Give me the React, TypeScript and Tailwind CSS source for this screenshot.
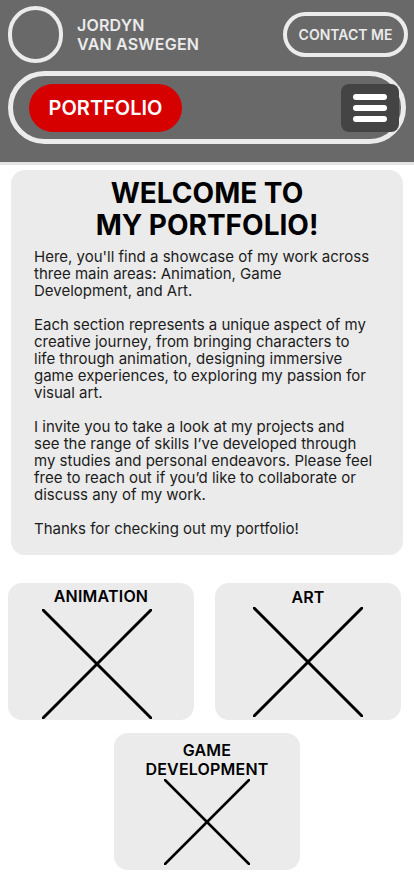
import React from 'react';

interface ProjectCardProps {
  title: string[];
  size: number;
  stroke: number;
  className?: string;
  crossClass?: string;
}

const Cross: React.FC<{ size: number; stroke: number }> = ({ size, stroke }) => (
  <svg width={size} height={size} viewBox={`0 0 ${size} ${size}`}>
    <line x1="1" y1="1" x2={size - 1} y2={size - 1} stroke="#000" strokeWidth={stroke} strokeLinecap="round" />
    <line x1={size - 1} y1="1" x2="1" y2={size - 1} stroke="#000" strokeWidth={stroke} strokeLinecap="round" />
  </svg>
);

const ProjectCard: React.FC<ProjectCardProps> = ({ title, size, stroke, className = '', crossClass = '' }) => (
  <div className={`h-[137px] w-[186px] rounded-[14px] bg-[#ebebeb] flex flex-col items-center ${className}`}>
    <h3 className="text-[16px] leading-[19px] font-semibold text-black text-center tracking-[0.2px]">
      {title.map((t) => (
        <div key={t}>{t}</div>
      ))}
    </h3>
    <div className={crossClass}>
      <Cross size={size} stroke={stroke} />
    </div>
  </div>
);

export default function App() {
  return (
    <div className="w-[414px] min-h-[896px] bg-white" style={{ fontFamily: 'Inter, "Liberation Sans", sans-serif' }}>
      {/* header */}
      <header className="h-[165px] bg-[#696969] border-b-[3px] border-[#e4e4e4] px-[8px] pt-[6px]">
        <div className="flex items-start justify-between">
          <div className="flex items-center">
            <div className="w-[55px] h-[57px] rounded-full border-[4px] border-[#ebebeb]" />
            <div className="ml-[14px] text-[#ebebeb] text-[16px] leading-[19px] font-semibold tracking-[0.2px]">
              <div>JORDYN</div>
              <div>VAN ASWEGEN</div>
            </div>
          </div>
          <button className="mt-[6px] mr-[-2px] h-[45px] w-[125px] rounded-full border-[4px] border-[#ebebeb] text-[#ebebeb] text-[14px] font-semibold">
            CONTACT ME
          </button>
        </div>
        <nav className="mt-[8px] h-[73px] w-[398px] rounded-full border-[5px] border-[#ebebeb] flex items-center justify-between pl-[16px] pr-[2px]">
          <div className="h-[48px] w-[153px] rounded-full bg-[#d60000] flex items-center justify-center text-white text-[20px] font-semibold">
            PORTFOLIO
          </div>
          <button className="h-[48px] w-[58px] rounded-[8px] bg-[#444444] flex flex-col items-center justify-center gap-[5px]">
            <span className="block h-[6px] w-[34px] rounded-full bg-white" />
            <span className="block h-[6px] w-[34px] rounded-full bg-white" />
            <span className="block h-[6px] w-[34px] rounded-full bg-white" />
          </button>
        </nav>
      </header>

      {/* welcome */}
      <section className="mt-[5px] mx-[11px] w-[392px] rounded-[14px] bg-[#ebebeb] pt-[7px] pb-[18px] px-[23px]">
        <h1 className="text-center text-[28px] leading-[32px] font-bold text-black">
          WELCOME TO
          <br />
          MY PORTFOLIO!
        </h1>
        <div className="mt-[7px] text-[15px] leading-[17px] text-[#1c1c1c] space-y-[17px]">
          <p>
            Here, you'll find a showcase of my work across
            <br />
            three main areas: Animation, Game
            <br />
            Development, and Art.
          </p>
          <p>
            Each section represents a unique aspect of my
            <br />
            creative journey, from bringing characters to
            <br />
            life through animation, designing immersive
            <br />
            game experiences, to exploring my passion for
            <br />
            visual art.
          </p>
          <p>
            I invite you to take a look at my projects and
            <br />
            see the range of skills I’ve developed through
            <br />
            my studies and personal endeavors. Please feel
            <br />
            free to reach out if you’d like to collaborate or
            <br />
            discuss any of my work.
          </p>
          <p>Thanks for checking out my portfolio!</p>
        </div>
      </section>

      {/* projects */}
      <div className="mt-[28px] px-[8px] flex justify-between pr-[13px]">
        <ProjectCard title={['ANIMATION']} size={110} stroke={3} className="pt-[4px]" crossClass="mt-[3px] mr-[9px]" />
        <ProjectCard title={['ART']} size={110} stroke={3} className="pt-[5px]" />
      </div>
      <div className="mt-[13px] flex justify-center">
        <ProjectCard title={['GAME', 'DEVELOPMENT']} size={86} stroke={2.5} className="pt-[8px]" />
      </div>
    </div>
  );
}
